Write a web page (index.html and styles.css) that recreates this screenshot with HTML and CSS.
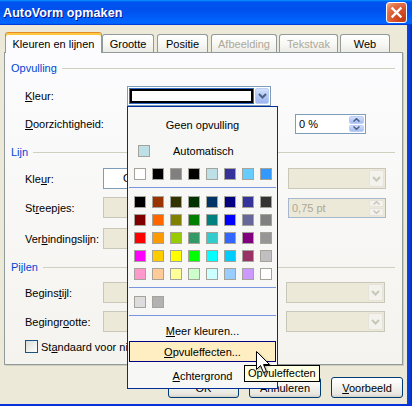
FILE: index.html
```html
<!DOCTYPE html>
<html lang="nl">
<head>
<meta charset="utf-8">
<title>AutoVorm opmaken</title>
<link rel="stylesheet" href="styles.css">
</head>
<body>
<div class="window">
  <div class="titlebar">
    <span class="title">AutoVorm opmaken</span>
    <span class="close"><svg width="13" height="13" viewBox="0 0 13 13"><path d="M2.5 2.5 L10.5 10.5 M10.5 2.5 L2.5 10.5" stroke="#fff" stroke-width="2.4" stroke-linecap="square"/></svg></span>
  </div>
  <div class="frame">
    <div class="client">
      <div class="tabs">
        <div class="tab active t-kleuren">Kleuren en lijnen</div>
        <div class="tab t-grootte">Grootte</div>
        <div class="tab t-positie">Positie</div>
        <div class="tab t-afbeelding disabled">Afbeelding</div>
        <div class="tab t-tekstvak disabled">Tekstvak</div>
        <div class="tab t-web">Web</div>
      </div>
      <div class="panel">
        <div class="legend l-opvulling">Opvulling</div>
        <div class="row r-fillcolor">
          <span class="lbl lbl-fill"><u>K</u>leur:</span>
          <div class="combo combo-fill">
            <div class="color-field"><span class="color-white"></span></div>
            <span class="drop hot"><svg width="9" height="6" viewBox="0 0 9 6"><path d="M1 1 L4.5 4.5 L8 1" fill="none" stroke="#4D6185" stroke-width="2"/></svg></span>
          </div>
        </div>
        <div class="row r-transp">
          <span class="lbl lbl-transp"><u>D</u>oorzichtigheid:</span>
          <div class="spin spin-transp">
            <span class="spin-text">0 %</span>
            <span class="spin-btns">
              <span class="spin-btn"><svg width="7" height="4" viewBox="0 0 7 4"><path d="M0.5 3.5 L3.5 0.7 L6.5 3.5" fill="none" stroke="#4D6185" stroke-width="1.5"/></svg></span>
              <span class="spin-btn"><svg width="7" height="4" viewBox="0 0 7 4"><path d="M0.5 0.5 L3.5 3.3 L6.5 0.5" fill="none" stroke="#4D6185" stroke-width="1.5"/></svg></span>
            </span>
          </div>
        </div>

        <div class="legend l-lijn">Lijn</div>
        <div class="row r-linecolor">
          <span class="lbl lbl-line">Kle<u>u</u>r:</span>
          <div class="box box-white"><span class="box-text">Geen lijn</span></div>
          <div class="combo combo-off right-lijn">
            <span class="combo-value"></span>
            <span class="drop off"><svg width="9" height="6" viewBox="0 0 9 6"><path d="M1 1 L4.5 4.5 L8 1" fill="none" stroke="#C9C7BA" stroke-width="2"/></svg></span>
          </div>
        </div>
        <div class="row r-dash">
          <span class="lbl lbl-line">St<u>r</u>eepjes:</span>
          <div class="box box-off"></div>
          <div class="spin spin-off right-lijn">
            <span class="spin-text">0,75 pt</span>
            <span class="spin-btns">
              <span class="spin-btn off"><svg width="7" height="4" viewBox="0 0 7 4"><path d="M0.5 3.5 L3.5 0.7 L6.5 3.5" fill="none" stroke="#C9C7BA" stroke-width="1.5"/></svg></span>
              <span class="spin-btn off"><svg width="7" height="4" viewBox="0 0 7 4"><path d="M0.5 0.5 L3.5 3.3 L6.5 0.5" fill="none" stroke="#C9C7BA" stroke-width="1.5"/></svg></span>
            </span>
          </div>
        </div>
        <div class="row r-connector">
          <span class="lbl lbl-line">Ver<u>b</u>indingslijn:</span>
          <div class="box box-off"></div>
        </div>

        <div class="legend l-pijlen">Pijlen</div>
        <div class="row r-beginstyle">
          <span class="lbl lbl-line">Begins<u>t</u>ijl:</span>
          <div class="box box-off"></div>
          <div class="combo combo-off right-pijl">
            <span class="combo-value"></span>
            <span class="drop off"><svg width="9" height="6" viewBox="0 0 9 6"><path d="M1 1 L4.5 4.5 L8 1" fill="none" stroke="#C9C7BA" stroke-width="2"/></svg></span>
          </div>
        </div>
        <div class="row r-beginsize">
          <span class="lbl lbl-line">Begingr<u>o</u>otte:</span>
          <div class="box box-off"></div>
          <div class="combo combo-off right-pijl">
            <span class="combo-value"></span>
            <span class="drop off"><svg width="9" height="6" viewBox="0 0 9 6"><path d="M1 1 L4.5 4.5 L8 1" fill="none" stroke="#C9C7BA" stroke-width="2"/></svg></span>
          </div>
        </div>
        <div class="row r-default">
          <span class="check"></span>
          <span class="check-label">St<u>a</u>ndaard voor nieuwe objecten</span>
        </div>
      </div>
      <div class="buttons">
        <button class="btn">OK</button>
        <button class="btn btn-wide">Annuleren</button>
        <button class="btn btn-wide"><span><u>V</u>oorbeeld</span></button>
      </div>
    </div>
    <div class="edge"></div>
  </div>

  <div class="popup">
    <div class="menu-item mi-none">Geen opvulling</div>
    <div class="auto-row"><span class="sw sw-auto"></span><span class="auto-text">Automatisch</span></div>
    <div class="swatches sw-recent">
      <span class="sw" style="background:#FFFFFF"></span>
      <span class="sw" style="background:#000000"></span>
      <span class="sw" style="background:#808080"></span>
      <span class="sw" style="background:#000000"></span>
      <span class="sw" style="background:#BCE0E6"></span>
      <span class="sw" style="background:#333399"></span>
      <span class="sw" style="background:#66CCFF"></span>
      <span class="sw" style="background:#3399FF"></span>
    </div>
    <div class="sep"></div>
    <div class="swatches sw-grid">
      <span class="sw" style="background:#000000"></span>
      <span class="sw" style="background:#993300"></span>
      <span class="sw" style="background:#333300"></span>
      <span class="sw" style="background:#003300"></span>
      <span class="sw" style="background:#003366"></span>
      <span class="sw" style="background:#000080"></span>
      <span class="sw" style="background:#333399"></span>
      <span class="sw" style="background:#333333"></span>
      <span class="sw" style="background:#800000"></span>
      <span class="sw" style="background:#FF6600"></span>
      <span class="sw" style="background:#808000"></span>
      <span class="sw" style="background:#008000"></span>
      <span class="sw" style="background:#008080"></span>
      <span class="sw" style="background:#0000FF"></span>
      <span class="sw" style="background:#666699"></span>
      <span class="sw" style="background:#808080"></span>
      <span class="sw" style="background:#FF0000"></span>
      <span class="sw" style="background:#FF9900"></span>
      <span class="sw" style="background:#99CC00"></span>
      <span class="sw" style="background:#339966"></span>
      <span class="sw" style="background:#33CCCC"></span>
      <span class="sw" style="background:#3366FF"></span>
      <span class="sw" style="background:#800080"></span>
      <span class="sw" style="background:#969696"></span>
      <span class="sw" style="background:#FF00FF"></span>
      <span class="sw" style="background:#FFCC00"></span>
      <span class="sw" style="background:#FFFF00"></span>
      <span class="sw" style="background:#00FF00"></span>
      <span class="sw" style="background:#00FFFF"></span>
      <span class="sw" style="background:#00CCFF"></span>
      <span class="sw" style="background:#993366"></span>
      <span class="sw" style="background:#C0C0C0"></span>
      <span class="sw" style="background:#FF99CC"></span>
      <span class="sw" style="background:#FFCC99"></span>
      <span class="sw" style="background:#FFFF99"></span>
      <span class="sw" style="background:#CCFFCC"></span>
      <span class="sw" style="background:#CCFFFF"></span>
      <span class="sw" style="background:#99CCFF"></span>
      <span class="sw" style="background:#CC99FF"></span>
      <span class="sw" style="background:#FFFFFF"></span>
    </div>
    <div class="sep"></div>
    <div class="swatches sw-grays">
      <span class="sw" style="background:#DDDDDD"></span>
      <span class="sw" style="background:#B2B2B2"></span>
    </div>
    <div class="sep"></div>
    <div class="menu-item mi-more"><u>M</u>eer kleuren...</div>
    <div class="menu-item mi-hot"><u>O</u>pvuleffecten...</div>
    <div class="menu-item mi-bg"><u>A</u>chtergrond</div>
  </div>

  <div class="tooltip">Opvuleffecten</div>

  <svg class="cursor" width="15" height="23" viewBox="0 0 15 23">
    <path d="M0.5 0.5 V18.5 L4.5 14.5 L7.5 21.5 L10.5 20.5 L7.5 13.5 H13.5 Z" fill="#fff" stroke="#000" stroke-width="1" stroke-linejoin="miter"/>
  </svg>
</div>
</body>
</html>
```

FILE: styles.css
```css
* { box-sizing: border-box; }

html, body {
  margin: 0;
  padding: 0;
}

body {
  width: 412px;
  height: 406px;
  overflow: hidden;
  font-family: "Liberation Sans", Arial, sans-serif;
  font-size: 11px;
  color: #000;
  background: #ECE9D8;
}

.window {
  position: relative;
  width: 412px;
  height: 406px;
  display: flex;
  flex-direction: column;
  background: #ECE9D8;
  overflow: hidden;
}

/* ---------- title bar ---------- */
.titlebar {
  flex: none;
  height: 25px;
  display: flex;
  align-items: center;
  justify-content: space-between;
  padding: 0 5px 0 3px;
  background: linear-gradient(180deg, #0997ff, #0053ee 8%, #0050ee 40%, #0066ff 88%, #0066ff 93%, #005bff 95%, #003dd7 96%, #003dd7);
}

.title {
  color: #fff;
  font-weight: bold;
  font-size: 12.5px;
  text-shadow: 1px 1px 0 #0F1089;
  letter-spacing: 0.1px;
}

.close {
  width: 21px;
  height: 21px;
  border: 1px solid #fff;
  border-radius: 3px;
  display: flex;
  align-items: center;
  justify-content: center;
  background: radial-gradient(circle at 85% 85%, #C43B10 0%, #D8522A 45%, #E4784F 75%, #F3B39A 100%);
}

/* ---------- frame ---------- */
.frame {
  flex: 1;
  display: flex;
  border-bottom: 2px solid #0831D9;
}

.client {
  flex: 1;
  padding-top: 7px;
}

.edge {
  width: 5px;
  background: linear-gradient(90deg, #0A49E0, #0838D6 60%, #0628B8);
}

/* ---------- tabs ---------- */
.tabs {
  display: flex;
  align-items: flex-end;
  height: 20px;
  padding-left: 5px;
}

.tab {
  height: 18px;
  border: 1px solid #919B9C;
  border-bottom: none;
  border-radius: 3px 3px 0 0;
  background: linear-gradient(180deg, #FFFFFF, #F7F7F3 55%, #ECEBE6);
  display: flex;
  align-items: center;
  justify-content: center;
  padding-top: 1px;
  white-space: nowrap;
}

.tab.active {
  height: 21px;
  margin-bottom: -1px;
  position: relative;
  z-index: 2;
  background: #FCFCFE;
  border-top: 1px solid #E68B2C;
  box-shadow: inset 0 2px 0 #FFC83C;
  padding-top: 2px;
}

.tab.disabled { color: #ACA899; }

.t-kleuren { width: 97px; }
.t-grootte { width: 52px; }
.t-positie { width: 51px; margin-left: 3px; }
.t-afbeelding { width: 66px; margin-left: 3px; }
.t-tekstvak { width: 59px; margin-left: 2px; }
.t-web { width: 50px; margin-left: 2px; }

/* ---------- panel ---------- */
.panel {
  position: relative;
  z-index: 1;
  margin-left: 4px;
  width: 399px;
  height: 313px;
  border: 1px solid #919B9C;
  background: linear-gradient(180deg, #FCFCFE, #F4F3EE);
  box-shadow: 1px 1px 0 #D0CEBF;
  display: flex;
  flex-direction: column;
}

.legend {
  display: flex;
  align-items: center;
  height: 14px;
  padding: 0 7px 0 6px;
  color: #0046D5;
}

.legend::after {
  content: "";
  flex: 1;
  height: 1px;
  margin-left: 5px;
  background: #D0D0BF;
}

.l-opvulling { margin-top: 8px; }
.l-lijn { margin-top: 11px; }
.l-pijlen { margin-top: 11px; }

.row {
  display: flex;
  align-items: center;
  height: 21px;
  padding-left: 20px;
  white-space: nowrap;
}

.r-fillcolor { margin-top: 11px; height: 20px; }
.r-transp { margin-top: 8px; height: 20px; }
.r-linecolor { margin-top: 9px; }
.r-dash { margin-top: 8px; }
.r-connector { margin-top: 10px; }
.r-beginstyle { margin-top: 8px; }
.r-beginsize { margin-top: 8px; }
.r-default { margin-top: 7px; height: 15px; }

.lbl { flex: none; }
.lbl-fill { width: 102px; }
.lbl-transp { width: 270px; }
.lbl-line { width: 78px; }

/* combo boxes */
.combo {
  display: flex;
  height: 21px;
  border: 1px solid #7F9DB9;
  background: #fff;
  padding: 1px;
}

.combo-fill {
  width: 144px;
  height: 20px;
}

.color-field {
  width: 125px;
  border: 1px solid #316AC5;
  display: flex;
}

.color-white {
  flex: 1;
  border: 2px solid #000;
  background: #fff;
}

.drop {
  width: 15px;
  margin-left: 1px;
  border-radius: 2px;
  display: flex;
  align-items: center;
  justify-content: center;
}

.drop.hot {
  width: 14px;
  border: 1px solid #BCCDF6;
  background: linear-gradient(180deg, #D2E0FD, #B4C8F6 50%, #9DB5F2);
}

.drop.off {
  border: 1px solid #E5E3DA;
  background: #F3F2EC;
}

.combo-off {
  border-color: #C9C7BA;
  background: #ECE9D8;
}

.combo-value { flex: 1; }

.right-lijn { margin-left: 38px; width: 98px; }
.right-pijl { margin-left: 36px; width: 99px; }

.box {
  width: 147px;
  height: 21px;
  border: 1px solid #C9C7BA;
}

.box-white {
  border-color: #7F9DB9;
  background: #fff;
  padding-left: 19px;
  line-height: 19px;
  overflow: hidden;
}

.box-text {
  display: block;
  width: 5px;
  overflow: hidden;
}

.box-off { background: #ECE9D8; }

/* spin boxes */
.spin {
  display: flex;
  height: 20px;
  border: 1px solid #7F9DB9;
  background: #fff;
  padding: 1px;
}

.spin-transp { width: 71px; }

.spin-text {
  flex: 1;
  padding-left: 2px;
  line-height: 16px;
}

.spin-btns {
  width: 15px;
  display: flex;
  flex-direction: column;
  gap: 1px;
}

.spin-btn {
  flex: 1;
  border: 1px solid #BCCDF6;
  border-radius: 2px;
  background: linear-gradient(180deg, #D2E0FD, #B4C8F6 60%, #A7BEF3);
  display: flex;
  align-items: center;
  justify-content: center;
}

.spin-btn.off {
  border-color: #E5E3DA;
  background: #F3F2EC;
}

.spin-off {
  border-color: #A5B8CE;
  background: #ECE9D8;
  color: #ACA899;
}

/* checkbox */
.check {
  width: 13px;
  height: 13px;
  margin-right: 3px;
  border: 1px solid #1C5180;
  background: linear-gradient(135deg, #DCDCD7, #FFFFFF);
}

.check-label {
  display: block;
  width: 86px;
  overflow: hidden;
}

/* ---------- buttons ---------- */
.buttons {
  display: flex;
  justify-content: flex-end;
  gap: 10px;
  margin-top: 12px;
  padding-right: 4px;
}

.btn {
  width: 71px;
  height: 21px;
  padding: 0;
  font: inherit;
  color: #000;
  border: 1px solid #003C74;
  border-radius: 3px;
  background: linear-gradient(180deg, #FFFFFF, #F4F4F0 45%, #E8E7E0 85%, #D6D0C5);
  display: flex;
  align-items: center;
  justify-content: center;
}

.btn-wide { width: 72px; }

/* ---------- popup ---------- */
.popup {
  position: absolute;
  left: 127px;
  top: 106px;
  width: 151px;
  height: 283px;
  z-index: 5;
  border: 1px solid #002D96;
  background: #F7F7F6;
  display: flex;
  flex-direction: column;
  white-space: nowrap;
}

.menu-item {
  height: 20px;
  display: flex;
  align-items: center;
  justify-content: center;
}

.mi-none { margin-top: 8px; }
.mi-more { margin-top: 5px; }
.mi-hot {
  height: 21px;
  margin: 0 1px;
  border: 1px solid #000080;
  background: #FFEEC2;
}
.mi-bg { margin-top: 3px; height: 21px; }

.auto-row {
  margin-top: 6px;
  height: 20px;
  display: flex;
  align-items: center;
  padding-left: 10px;
}

.auto-text { margin-left: 23px; }

.sw {
  width: 12px;
  height: 12px;
  border: 1px solid #A6A39A;
  display: block;
}

.sw-auto { background: #BCE0E6; }

.swatches {
  display: grid;
  grid-template-columns: repeat(8, 12px);
  gap: 6px;
  padding-left: 6px;
}

.sw-recent { margin-top: 7px; }
.sw-grid { margin-top: 8px; }
.sw-grays { margin-top: 8px; }

.sep {
  height: 1px;
  margin: 7px 1px 0;
  background: #7A96DF;
}

/* ---------- tooltip + cursor ---------- */
.tooltip {
  position: absolute;
  left: 244px;
  top: 365px;
  height: 17px;
  z-index: 7;
  padding: 0 3px;
  border: 1px solid #000;
  background: #FFFFE1;
  line-height: 15px;
  white-space: nowrap;
}

.cursor {
  position: absolute;
  left: 256px;
  top: 351px;
  z-index: 9;
  filter: drop-shadow(1px 1px 1px rgba(0, 0, 0, 0.35));
}
```
